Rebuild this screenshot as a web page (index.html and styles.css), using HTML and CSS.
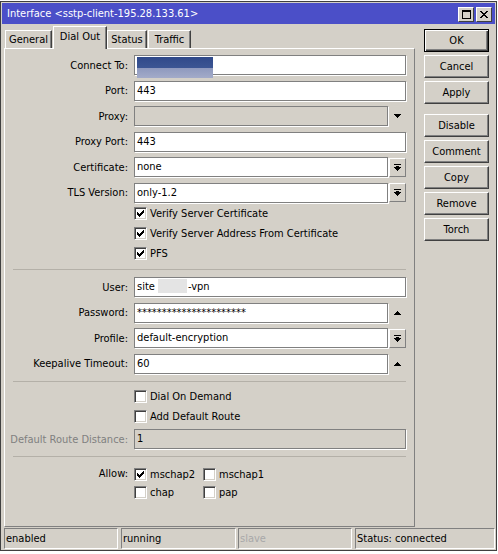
FILE: index.html
```html
<!DOCTYPE html>
<html>
<head>
    <title>Interface</title>
    <link rel="stylesheet" href="styles.css">
</head>
<body>

<div class="window">

    <!-- Barra de título -->
    <div class="titlebar">
        <span class="title">Interface &lt;sstp-client-195.28.133.61&gt;</span>
        <span class="tbtn">
            <svg width="9" height="9" viewBox="0 0 9 9" shape-rendering="crispEdges"><path d="M0 0h9v2h-9z M0 2h1v7h-1z M8 2h1v7h-1z M1 8h7v1h-7z" fill="#000"/></svg>
        </span>
        <span class="tbtn">
            <svg width="8" height="7" viewBox="0 0 8 7" shape-rendering="crispEdges"><path d="M0 0h2v1h-2z M6 0h2v1h-2z M1 1h2v1h-2z M5 1h2v1h-2z M2 2h4v1h-4z M3 3h2v1h-2z M2 4h4v1h-4z M1 5h2v1h-2z M5 5h2v1h-2z M0 6h2v1h-2z M6 6h2v1h-2z" fill="#000"/></svg>
        </span>
    </div>

    <div class="main">
        <div class="left">
            <!-- Pestañas -->
            <div class="tabs">
                <div class="tab t-general">General</div>
                <div class="tab t-dial active">Dial Out</div>
                <div class="tab t-status">Status</div>
                <div class="tab t-traffic">Traffic</div>
            </div>

            <div class="panel">
                <div class="row">
                    <span class="label">Connect To:</span>
                    <div class="field wide sel-field"><span class="blur-sel"></span></div>
                </div>
                <div class="row">
                    <span class="label">Port:</span>
                    <div class="field wide">443</div>
                </div>
                <div class="row">
                    <span class="label">Proxy:</span>
                    <div class="field disabled"></div>
                    <span class="arrow"><svg width="7" height="4" viewBox="0 0 7 4" shape-rendering="crispEdges"><path d="M0 0h7v1h-7z M1 1h5v1h-5z M2 2h3v1h-3z M3 3h1v1h-1z" fill="#000"/></svg></span>
                </div>
                <div class="row">
                    <span class="label">Proxy Port:</span>
                    <div class="field wide">443</div>
                </div>
                <div class="row">
                    <span class="label">Certificate:</span>
                    <div class="field">none</div>
                    <span class="dd"><svg width="7" height="7" viewBox="0 0 7 7" shape-rendering="crispEdges"><path d="M0 0h7v1h-7z M2 2h3v1h-3z M0 3h7v1h-7z M1 4h5v1h-5z M2 5h3v1h-3z M3 6h1v1h-1z" fill="#000"/></svg></span>
                </div>
                <div class="row">
                    <span class="label">TLS Version:</span>
                    <div class="field">only-1.2</div>
                    <span class="dd"><svg width="7" height="7" viewBox="0 0 7 7" shape-rendering="crispEdges"><path d="M0 0h7v1h-7z M2 2h3v1h-3z M0 3h7v1h-7z M1 4h5v1h-5z M2 5h3v1h-3z M3 6h1v1h-1z" fill="#000"/></svg></span>
                </div>

                <div class="checks first">
                    <div class="check-row"><span class="cb on"></span>Verify Server Certificate</div>
                    <div class="check-row"><span class="cb on"></span>Verify Server Address From Certificate</div>
                    <div class="check-row"><span class="cb on"></span>PFS</div>
                </div>

                <div class="sep sep1"></div>

                <div class="row">
                    <span class="label">User:</span>
                    <div class="field wide">site<span class="blur-user"></span>-vpn</div>
                </div>
                <div class="row">
                    <span class="label">Password:</span>
                    <div class="field">**********************</div>
                    <span class="arrow"><svg width="7" height="4" viewBox="0 0 7 4" shape-rendering="crispEdges"><path d="M3 0h1v1h-1z M2 1h3v1h-3z M1 2h5v1h-5z M0 3h7v1h-7z" fill="#000"/></svg></span>
                </div>
                <div class="row">
                    <span class="label">Profile:</span>
                    <div class="field">default-encryption</div>
                    <span class="dd"><svg width="7" height="7" viewBox="0 0 7 7" shape-rendering="crispEdges"><path d="M0 0h7v1h-7z M2 2h3v1h-3z M0 3h7v1h-7z M1 4h5v1h-5z M2 5h3v1h-3z M3 6h1v1h-1z" fill="#000"/></svg></span>
                </div>
                <div class="row">
                    <span class="label">Keepalive Timeout:</span>
                    <div class="field">60</div>
                    <span class="arrow"><svg width="7" height="4" viewBox="0 0 7 4" shape-rendering="crispEdges"><path d="M3 0h1v1h-1z M2 1h3v1h-3z M1 2h5v1h-5z M0 3h7v1h-7z" fill="#000"/></svg></span>
                </div>

                <div class="sep sep2"></div>

                <div class="checks second">
                    <div class="check-row"><span class="cb"></span>Dial On Demand</div>
                    <div class="check-row"><span class="cb"></span>Add Default Route</div>
                </div>
                <div class="row dist-row">
                    <span class="label off">Default Route Distance:</span>
                    <div class="field wide disabled">1</div>
                </div>

                <div class="sep sep3"></div>

                <div class="allow">
                    <span class="label">Allow:</span>
                    <div class="allow-grid">
                        <div class="allow-item"><span class="cb on"></span>mschap2</div>
                        <div class="allow-item"><span class="cb"></span>mschap1</div>
                        <div class="allow-item"><span class="cb"></span>chap</div>
                        <div class="allow-item"><span class="cb"></span>pap</div>
                    </div>
                </div>
            </div>
        </div>

        <!-- Botones -->
        <div class="buttons">
            <div class="btn default">OK</div>
            <div class="btn">Cancel</div>
            <div class="btn group-end">Apply</div>
            <div class="btn">Disable</div>
            <div class="btn">Comment</div>
            <div class="btn">Copy</div>
            <div class="btn">Remove</div>
            <div class="btn">Torch</div>
        </div>
    </div>

    <!-- Barra de estado -->
    <div class="statusbar">
        <div class="seg s1">enabled</div>
        <div class="seg s2">running</div>
        <div class="seg s3 off">slave</div>
        <div class="seg s4">Status: connected</div>
    </div>

</div>

</body>
</html>
```

FILE: styles.css
```css
/* Estilo general */
body {
    margin: 0;
    background-color: #fff;
    font-family: "DejaVu Sans Condensed", "DejaVu Sans", sans-serif;
    font-stretch: condensed;
    font-size: 11px;
    color: #000;
}

.window {
    width: 493px;
    margin-top: 1px;
    border: 1px solid #404040;
    padding: 1px;
    background-color: #d4d0c8;
}

/* Barra de título */
.titlebar {
    height: 21px;
    background-color: #4b4fc8;
    color: #fff;
    display: flex;
    align-items: center;
    padding-left: 5px;
}

.title {
    flex: 1;
}

.tbtn {
    width: 14px;
    height: 13px;
    margin-top: 1px;
    margin-left: 2px;
    background-color: #d4d0c8;
    border: 1px solid;
    border-color: #fff #404040 #404040 #fff;
    display: flex;
    align-items: center;
    justify-content: center;
}

.tbtn:last-child {
    margin-right: 3px;
}

/* Zona principal */
.main {
    display: flex;
    padding-top: 2px;
}

.left {
    margin-left: 2px;
    width: 411px;
}

/* Pestañas */
.tabs {
    display: flex;
    align-items: flex-end;
    height: 22px;
    padding-left: 1px;
}

.tab {
    height: 18px;
    box-sizing: border-box;
    border: 1px solid;
    border-color: #fff #404040 transparent #fff;
    border-bottom: none;
    box-shadow: inset -1px 0 #808080;
    text-align: center;
    line-height: 17px;
}

.tab.active {
    position: relative;
    z-index: 1;
    height: 23px;
    margin-bottom: -1px;
    line-height: 20px;
    background-color: #d4d0c8;
}

.t-general { width: 47px; }
.t-dial { width: 54px; margin-left: 1px; }
.t-status { width: 40px; }
.t-traffic { width: 43px; margin-left: 1px; }

/* Panel: columna flex para que los márgenes no colapsen */
.panel {
    height: 479px;
    box-sizing: border-box;
    border: 1px solid;
    border-color: #fff #808080 #808080 #fff;
    padding-top: 6px;
    display: flex;
    flex-direction: column;
}

.row {
    display: flex;
    align-items: center;
    height: 20px;
    margin-bottom: 5.5px;
    flex: none;
}

.label {
    width: 123px;
    margin-right: 6px;
    text-align: right;
    flex: none;
}

.label.off {
    color: #808080;
}

.field {
    width: 254px;
    height: 20px;
    box-sizing: border-box;
    background-color: #fff;
    border: 1px solid #808080;
    box-shadow: 1px 1px 0 #fff;
    padding-left: 2px;
    line-height: 18px;
    white-space: nowrap;
    overflow: hidden;
}

.field.wide {
    width: 272px;
}

.field.disabled {
    background-color: #d4d0c8;
}

.sel-field {
    position: relative;
    overflow: visible;
}

.blur-sel {
    position: absolute;
    left: 2px;
    top: 1px;
    width: 76px;
    height: 21px;
    background: linear-gradient(to bottom, #30498a 0, #3b5593 50%, #8d98bd 50%, #a3abc9 100%);
}

.blur-user {
    display: inline-block;
    width: 29px;
    height: 14px;
    margin: 0 1px 0 3px;
    vertical-align: -3px;
    background-color: #e4e4e4;
}

.dd {
    width: 17px;
    height: 19px;
    margin-left: 1px;
    box-sizing: border-box;
    border: 1px solid;
    border-color: #fff #808080 #808080 #fff;
    display: flex;
    align-items: center;
    justify-content: center;
}

.arrow {
    width: 17px;
    margin-left: 1px;
    display: flex;
    justify-content: center;
}

/* Casillas */
.checks.first {
    margin-top: -5px;
}

.checks.second {
    margin-top: 4px;
}

.check-row {
    height: 20px;
    display: flex;
    align-items: center;
    padding-left: 129px;
}

.cb {
    width: 13px;
    height: 13px;
    box-sizing: border-box;
    margin-right: 3px;
    background-color: #fff;
    border: 1px solid;
    border-color: #808080 #fff #fff #808080;
    box-shadow: inset 1px 1px #404040, inset -1px -1px #d4d0c8;
    flex: none;
}

.cb.on {
    background: #fff url("data:image/svg+xml,%3Csvg xmlns='http://www.w3.org/2000/svg' width='7' height='7' shape-rendering='crispEdges'%3E%3Cpath d='M6 0h1v1h-1z M5 1h2v1h-2z M0 2h1v1h-1z M4 2h3v1h-3z M0 3h2v1h-2z M3 3h3v1h-3z M0 4h5v1h-5z M1 5h3v1h-3z M2 6h1v1h-1z' fill='%23000'/%3E%3C/svg%3E") no-repeat 2px 2px;
}

.dist-row {
    margin-top: 3px;
}

/* Separadores */
.sep {
    height: 1px;
    margin-left: 8px;
    width: 393px;
    background-color: #b4b0a8;
    flex: none;
}

.sep1 { margin-top: 6px; margin-bottom: 7px; }
.sep2 { margin-top: 2px; }
.sep3 { margin-top: 1.5px; }

/* Allow */
.allow {
    display: flex;
    margin-top: 8px;
}

.allow .label {
    line-height: 18px;
}

.allow-grid {
    display: grid;
    grid-template-columns: 69px auto;
}

.allow-item {
    height: 18px;
    display: flex;
    align-items: center;
}

/* Botones */
.buttons {
    margin-left: 9px;
    margin-top: 3px;
    width: 65px;
    display: flex;
    flex-direction: column;
    gap: 3px;
}

.btn {
    height: 23px;
    box-sizing: border-box;
    border: 1px solid;
    border-color: #fff #404040 #404040 #fff;
    box-shadow: inset -1px -1px #808080;
    text-align: center;
    line-height: 21px;
}

.btn.default {
    border-color: #000;
    box-shadow: inset 1px 1px #fff, inset -1px -1px #404040, inset -2px -2px #808080;
}

.btn.group-end {
    margin-bottom: 7px;
}

/* Barra de estado */
.statusbar {
    display: flex;
    margin-top: 1px;
    height: 21px;
}

.seg {
    height: 21px;
    box-sizing: border-box;
    border: 1px solid;
    border-color: #808080 #fff #fff #808080;
    padding-left: 1px;
    line-height: 19px;
    white-space: nowrap;
    overflow: hidden;
}

.seg.off {
    color: #a8a8a8;
}

.s1 { width: 114px; margin-left: 2px; }
.s2 { width: 115px; margin-left: 3px; }
.s3 { width: 114px; margin-left: 2px; }
.s4 { width: 140px; margin-left: 3px; }
```
